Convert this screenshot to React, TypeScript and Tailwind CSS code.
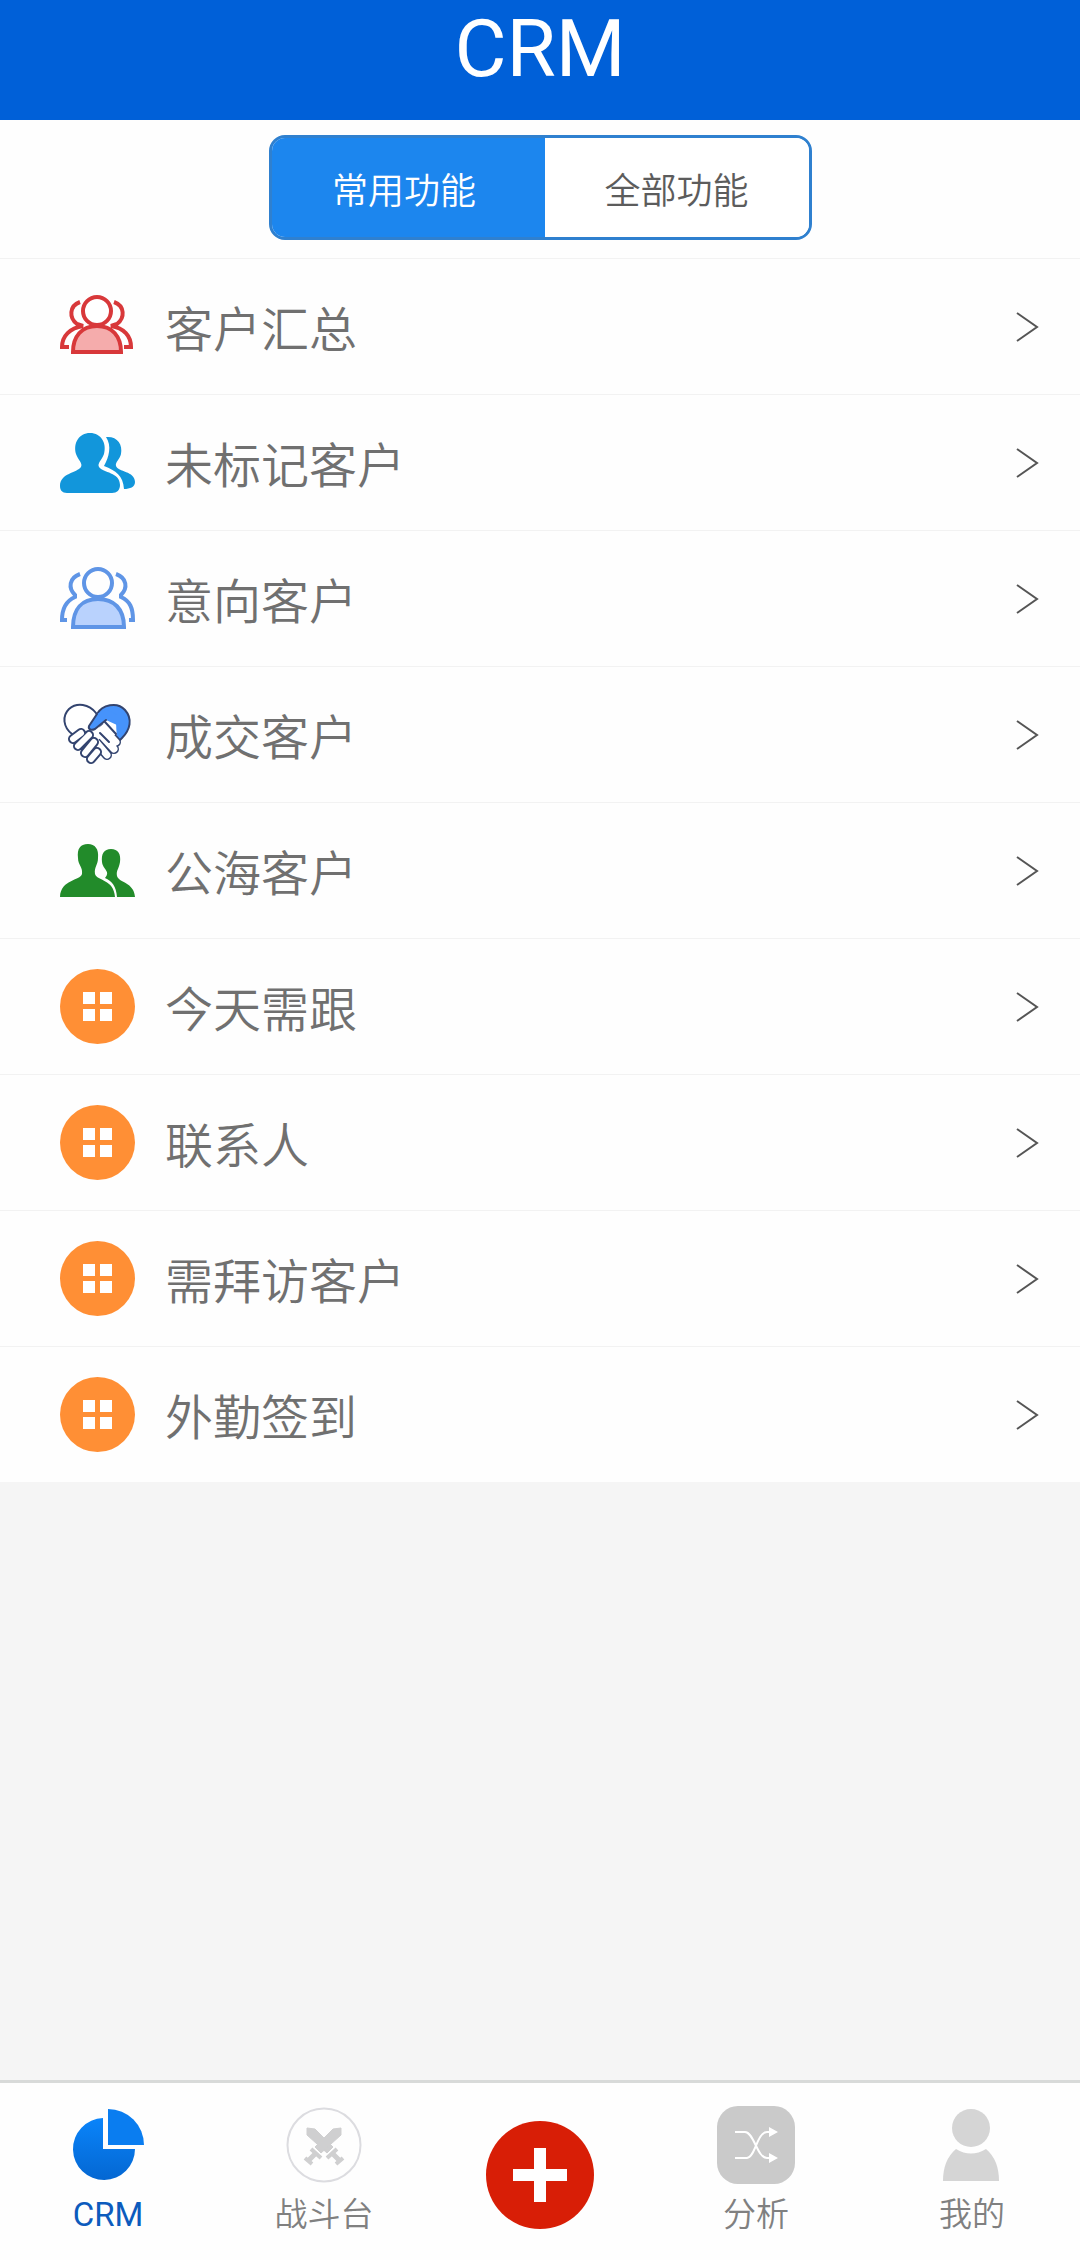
import type { ReactNode } from "react"

const SANS = "font-['Roboto','Noto_Sans_CJK_SC',sans-serif]"

function GroupIcon() {
  return (
    <svg viewBox="0 0 75 75" className="size-[75px]" fill="none" stroke="#d8383a" strokeWidth="4" aria-hidden="true">
      <path d="M20 13C9 17 9 29 17 35L23 37C10 39 2 47 2 58H9" />
      <path d="M54 13C65 17 65 29 57 35L51 37C64 39 71 47 71 58H64" />
      <path d="M13 63C13 47 22 37 37 37S61 47 61 63Z" fill="#f5acac" />
      <circle cx="37" cy="22" r="14" fill="#fff" />
    </svg>
  )
}

function OpenGroupIcon() {
  return (
    <svg viewBox="0 0 75 75" className="size-[75px]" fill="none" stroke="#5f95e6" strokeWidth="4" aria-hidden="true">
      <circle cx="38" cy="22" r="14" />
      <path d="M13 66C13 48 22 38 38 38S64 48 64 66Z" fill="#b9d2fd" />
      <path d="M20 13C9 17 8 27 15 34V36C6 40 2 47 2 59H7" />
      <path d="M56 13C67 17 68 27 61 34V36C70 40 73 47 73 59H69" />
    </svg>
  )
}

function PairIcon() {
  return (
    <svg viewBox="0 0 75 75" className="size-[75px]" fill="#1296db" aria-hidden="true">
      <path d="M46 12C57 11 63 19 61 29C60 34 55 37 56 41C58 47 75 46 75 57C75 62 70 64 64 64C63 50 56 46 44 41C49 32 52 21 46 12Z" />
      <path d="M30 8C41 8 47 18 44 29C42 35 37 38 39 42C43 48 60 47 60 60C60 65 57 68 52 68H7C2 68 0 65 0 61C0 48 17 48 21 42C23 38 18 35 16 29C13 18 19 8 30 8Z" />
    </svg>
  )
}

function HandshakeIcon() {
  const fingers = "M13 42L21 36M18 49L29 38M25 56L34 45M31 62L37 55"
  const otherFingers = "M56 45L44 32M54 52L41 38M47 58L36 45"
  return (
    <svg
      viewBox="0 0 75 75"
      className="size-[75px]"
      fill="#fff"
      stroke="#33446f"
      strokeWidth="2"
      strokeLinecap="round"
      strokeLinejoin="round"
      aria-hidden="true"
    >
      <path d="M12 37C3 30 2 19 9 12C17 5 29 7 36 16L43 28L30 40Z" />
      <path d="M37 17C42 8 57 4 65 13C73 22 70 33 62 41L57 46L46 23Z" fill="#4693fb" />
      <path d="M35 32L46 22L56 26L57 44L50 54L38 55L28 42Z" stroke="none" />
      <path d={otherFingers} strokeWidth="10" />
      <path d={otherFingers} stroke="#fff" strokeWidth="7" />
      <path d="M36 33L47 24L55 28L55 38L42 40L34 46Z" stroke="none" />
      <path d="M45 25L56 37M40 36L49 45" fill="none" />
      <path d={fingers} strokeWidth="10" />
      <path d={fingers} stroke="#fff" strokeWidth="6" />
      <path d="M37 17L29 29C28 32 31 34 35 32L46 23L57 28V18L46 12Z" fill="#4693fb" stroke="none" />
      <path d="M37 17L29 29C28 32 31 34 35 32L46 23" fill="none" />
    </svg>
  )
}

function PublicPairIcon() {
  return (
    <svg viewBox="0 0 75 75" className="size-[75px]" fill="#228b2a" aria-hidden="true">
      <path d="M51 16C58 16 61 21 60 29C59 36 56 37 57 43C59 50 74 49 75 64H57C56 53 52 48 45 45C51 38 43 37 42 29C41 21 44 16 51 16Z" />
      <path d="M28 11C35 11 39 16 38 25C38 32 34 34 35 41C37 48 54 46 55 64H0C1 46 20 48 22 41C23 34 18 32 18 25C17 16 20 11 28 11Z" />
    </svg>
  )
}

function GridIcon() {
  return (
    <svg viewBox="0 0 75 75" className="size-[75px]" aria-hidden="true">
      <circle cx="37.5" cy="37.5" r="37.5" fill="#ff8f35" />
      <path fill="#fff" d="M23 23h12v12H23zM40 23h12v12H40zM23 40h12v12H23zM40 40h12v12H40z" />
    </svg>
  )
}

const menu: { label: string; icon: ReactNode }[] = [
  { label: "客户汇总", icon: <GroupIcon /> },
  { label: "未标记客户", icon: <PairIcon /> },
  { label: "意向客户", icon: <OpenGroupIcon /> },
  { label: "成交客户", icon: <HandshakeIcon /> },
  { label: "公海客户", icon: <PublicPairIcon /> },
  { label: "今天需跟", icon: <GridIcon /> },
  { label: "联系人", icon: <GridIcon /> },
  { label: "需拜访客户", icon: <GridIcon /> },
  { label: "外勤签到", icon: <GridIcon /> },
]

function PieIcon() {
  return (
    <svg viewBox="0 0 78 78" className="size-[78px]" aria-hidden="true">
      <defs>
        <linearGradient id="pie" x1="0" y1="0" x2="0" y2="1">
          <stop offset="0" stopColor="#0a84fa" />
          <stop offset="1" stopColor="#0467d2" />
        </linearGradient>
      </defs>
      <path d="M34 12A31 31 0 1 0 66 43H34Z" fill="url(#pie)" />
      <path d="M39 3A36 36 0 0 1 75 39H39Z" fill="#0a7df0" />
    </svg>
  )
}

function SwordsIcon() {
  return (
    <svg viewBox="0 0 78 78" className="size-[78px]" aria-hidden="true">
      <circle cx="39" cy="39" r="36.5" fill="none" stroke="#dcdce0" strokeWidth="2" />
      <g fill="#cfcfd0" stroke="#cfcfd0">
        <path d="M22 22L30 23L48 41L42 47L22 29Z" />
        <path d="M56 22L48 23L30 41L36 47L56 29Z" />
        <path d="M26 43L36 52M52 43L42 52" strokeWidth="4" />
        <path d="M31 47L24 54M47 47L54 54" strokeWidth="5" />
        <path d="M20 52L27 58M58 52L51 58" strokeWidth="4" />
      </g>
    </svg>
  )
}

function ShuffleIcon() {
  return (
    <svg viewBox="0 0 78 78" className="size-[78px]" aria-hidden="true">
      <rect width="78" height="78" rx="21" fill="#cacaca" />
      <g fill="none" stroke="#fff" strokeWidth="2">
        <path d="M18 26H28C37 26 40 52 50 52H55" />
        <path d="M18 52H30C38 52 40 26 50 26H55" />
      </g>
      <path d="M52 21L61 26L52 31ZM52 47L61 52L52 57Z" fill="#fff" />
    </svg>
  )
}

function PersonIcon() {
  return (
    <svg viewBox="0 0 78 78" className="size-[78px]" fill="#d5d5d5" aria-hidden="true">
      <circle cx="38" cy="22" r="19" />
      <path d="M23 43Q38 52 53 43Q66 54 66 75H10Q10 54 23 43Z" />
    </svg>
  )
}

function NavItem({ label, icon, active = false }: { label: string; icon: ReactNode; active?: boolean }) {
  return (
    <a
      href="#"
      className={`flex flex-1 flex-col items-center gap-[7px] pt-[23px] text-[33px] leading-[48px] ${
        active ? "font-normal text-[#0c5bbd]" : "font-[350] text-[#808080]"
      }`}
    >
      {icon}
      <span>{label}</span>
    </a>
  )
}

export default function App() {
  return (
    <div className={`flex min-h-screen flex-col bg-[#f5f5f5] ${SANS}`}>
      <header className="flex h-[120px] justify-center bg-[#0060d8]">
        <h1 className="text-[80px] leading-[98px] text-white">CRM</h1>
      </header>

      <main className="bg-[#fefefe]">
        <div className="flex justify-center pt-[15px] pb-[18px]">
          <div className="flex h-[105px] overflow-hidden rounded-2xl border-3 border-[#2f80cf] text-[36px] font-[350]">
            <button type="button" className="w-[273px] bg-[#1c86ee] pt-2 pr-2 text-white">
              常用功能
            </button>
            <button type="button" className="w-[264px] bg-white pt-2 text-[#5c5c5c]">
              全部功能
            </button>
          </div>
        </div>

        <ul>
          {menu.map((item) => (
            <li key={item.label} className="border-t border-[#f2f2f2]">
              <a href="#" className="flex h-[135px] items-center gap-[30px] pr-10 pl-[60px] text-5xl text-[#707070]">
                {item.icon}
                <span className="flex-1 pt-2 font-[350]">{item.label}</span>
                <svg viewBox="0 0 24 32" className="h-8 w-6" fill="none" stroke="#555" strokeWidth="2" aria-hidden="true">
                  <path d="M1 2L21 16L1 30" />
                </svg>
              </a>
            </li>
          ))}
        </ul>
      </main>

      <nav className="mt-auto flex h-[180px] border-t-3 border-[#d8dad9] bg-[#fefefe]">
        <NavItem label="CRM" icon={<PieIcon />} active />
        <NavItem label="战斗台" icon={<SwordsIcon />} />
        <div className="flex flex-1 items-start justify-center pt-[38px]">
          <button type="button" aria-label="新增" className="flex size-[108px] items-center justify-center rounded-full bg-[#d81e06]">
            <svg viewBox="0 0 54 54" className="size-[54px]" aria-hidden="true">
              <path d="M21 0h12v21h21v12H33v21H21V33H0V21h21z" fill="#fff" />
            </svg>
          </button>
        </div>
        <NavItem label="分析" icon={<ShuffleIcon />} />
        <NavItem label="我的" icon={<PersonIcon />} />
      </nav>
    </div>
  )
}
